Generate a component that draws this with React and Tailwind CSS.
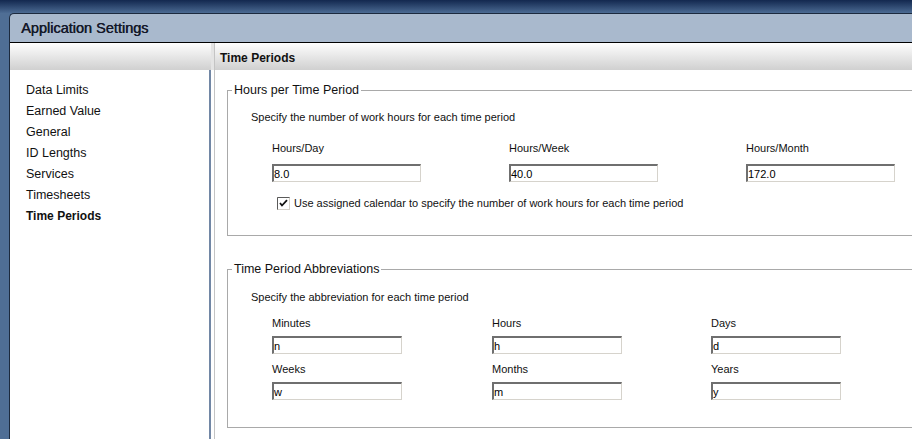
import React from "react";

const font = { fontFamily: "'Liberation Sans', Arial, sans-serif" };

const inputCls =
  "h-[18px] bg-white text-[11px] leading-[14px] px-0 text-black outline-none border-t-2 border-l-2 border-r border-b border-t-[#6f6f6f] border-l-[#6f6f6f] border-r-[#d6d3cc] border-b-[#d6d3cc]";

function Field({ label, value }) {
  return (
    <div className="flex flex-col">
      <div className="leading-[14px] h-[14px]">{label}</div>
      <input readOnly value={value} className={`w-[149px] mt-[9px] ${inputCls}`} />
    </div>
  );
}

function SmallField({ label, value }) {
  return (
    <div className="flex flex-col">
      <div className="leading-[14px] h-[14px]">{label}</div>
      <input readOnly value={value} className={`w-[130px] mt-[6px] ${inputCls}`} />
    </div>
  );
}

function CheckBox() {
  return (
    <svg width="13" height="13" viewBox="0 0 13 13" className="shrink-0">
      <rect x="0.5" y="0.5" width="12" height="12" fill="#fff" stroke="#d4d0c8" />
      <path d="M0.5 12.5 V0.5 H12.5" fill="none" stroke="#5a5a5a" />
      <path d="M3 6 L5 8.5 L10 3.2" fill="none" stroke="#111" strokeWidth="1.8" />
    </svg>
  );
}

const sections = ["Data Limits", "Earned Value", "General", "ID Lengths", "Services", "Timesheets", "Time Periods"];

export default function App() {
  return (
    <div style={font} className="w-[912px] h-[439px] overflow-hidden bg-[#4f6e95] flex flex-col text-[11px] text-[#111]">
      <div className="h-[13px] bg-gradient-to-b from-[#13284f] to-[#4c6b93]" />
      <div className="flex-1 flex pl-[9px] min-h-0">
        <div className="flex-1 flex flex-col border-l border-t border-[#1c2a3e] rounded-tl-[5px] bg-[#a9b9cd] min-h-0">
          <div className="h-[29px] flex items-center pl-[11px] pt-[1px] border-b border-black">
            <span className="text-[14.5px] text-[#14182a] [text-shadow:0.4px_0_0_#14182a]">Application Settings</span>
          </div>
          <div className="flex-1 flex bg-white min-h-0">
            {/* left nav */}
            <div className="w-[201px] flex flex-col">
              <div className="h-[27px] bg-gradient-to-b from-[#fefefe] to-[#d0d0d0]" />
              <div className="flex-1 border-r-2 border-[#7287a5] pl-[16px] pt-[10px] leading-[21px] text-[12.5px]">
                {sections.map((s) => (
                  <div key={s} className={s === "Time Periods" ? "font-bold text-[12px]" : ""}>{s}</div>
                ))}
              </div>
            </div>
            <div className="w-[3px] flex flex-col">
              <div className="h-[27px] bg-[#e4e4e4]" />
              <div className="flex-1 bg-white" />
            </div>
            {/* right content */}
            <div className="flex-1 flex flex-col border-l border-[#c4c4c4] min-w-0">
              <div className="h-[27px] bg-gradient-to-b from-[#fefefe] to-[#d0d0d0] flex items-center pl-[5px] pt-[2px] font-bold text-[12px]">
                Time Periods
              </div>
              <div className="pl-[12px] pt-[13px]">
                <fieldset className="w-[700px] border border-[#a9a9a9] pl-[23px] pb-[25px]">
                  <legend className="-ml-[19px] px-[2px] leading-[14px] text-[12.5px]">Hours per Time Period</legend>
                  <div className="mt-[13px] leading-[14px]">Specify the number of work hours for each time period</div>
                  <div className="mt-[17px] ml-[21px] flex gap-[88px]">
                    <Field label="Hours/Day" value="8.0" />
                    <Field label="Hours/Week" value="40.0" />
                    <Field label="Hours/Month" value="172.0" />
                  </div>
                  <div className="mt-[14px] ml-[26px] flex items-center gap-[4px] leading-[14px]">
                    <CheckBox />
                    <span>Use assigned calendar to specify the number of work hours for each time period</span>
                  </div>
                </fieldset>
                <fieldset className="mt-[26px] w-[700px] border border-[#a9a9a9] pl-[23px] pb-[27px]">
                  <legend className="-ml-[19px] px-[2px] leading-[14px] text-[12.5px]">Time Period Abbreviations</legend>
                  <div className="mt-[14px] leading-[14px]">Specify the abbreviation for each time period</div>
                  <div className="mt-[12px] ml-[21px] grid grid-cols-[220px_219px_150px] gap-y-[8px]">
                    <SmallField label="Minutes" value="n" />
                    <SmallField label="Hours" value="h" />
                    <SmallField label="Days" value="d" />
                    <SmallField label="Weeks" value="w" />
                    <SmallField label="Months" value="m" />
                    <SmallField label="Years" value="y" />
                  </div>
                </fieldset>
              </div>
            </div>
          </div>
        </div>
      </div>
    </div>
  );
}
